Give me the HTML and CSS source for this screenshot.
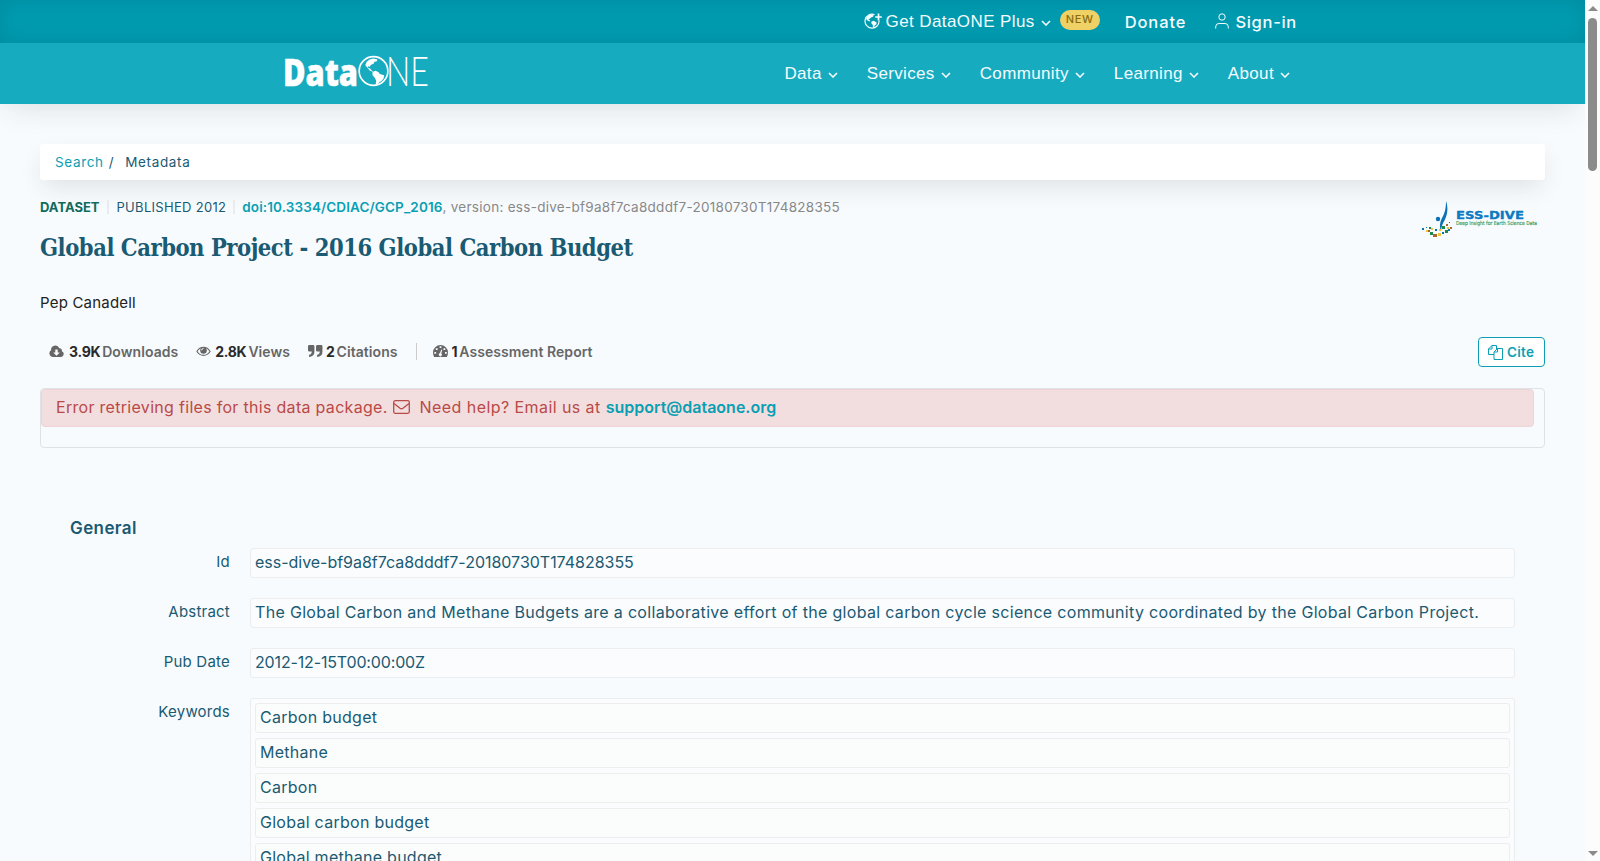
FILE: index.html
```html
<!DOCTYPE html>
<html lang="en">
<head>
    <meta charset="UTF-8">
    <meta name="viewport" content="width=device-width, initial-scale=1.0">
    <title>Global Carbon Project - 2016 Global Carbon Budget</title>
    <link rel="stylesheet" href="styles.css">
</head>
<body>

<!-- Shared icons -->
<svg class="sprite" aria-hidden="true">
    <symbol id="chevron" viewBox="0 0 10 6">
        <path d="M1 1l4 4 4-4" fill="none" stroke="currentColor" stroke-width="1.6"/>
    </symbol>
    <symbol id="globe" viewBox="0 0 32 32">
        <circle cx="16" cy="16" r="14.8" fill="none" stroke="currentColor" stroke-width="1.7"/>
        <path d="M7.500 10l1.500-3.500 3-2.500 4-1 4 1-.5 2-2.500.5-1 2-2.500 1-1.500 2-2-.5.5 2 2 .5 1.500 2 1.500.8-.5.6-3-1.400-2-2.500zM15 17l3-1.200 3 1.200 1.500 2 4.500 1.500-.5 3-2 2.500-2.500 1.500-2 2.800-1.800.2.600-4.500-1.500-3-2.300-2.500z" fill="currentColor"/>
    </symbol>
</svg>

<div class="page">
    <header class="header">
        <div class="top-bar">
            <div class="top-links">
                <a class="plus-link" href="#">
                    <svg class="globe-plus" viewBox="0 0 18 17">
                        <path d="M10.5 1.6A7 7 0 1 0 15 7.5" fill="none" stroke="currentColor" stroke-width="1.2"/>
                        <path d="M2 6c.5-3 3-4.500 5.500-4.600l2 .8-.5 1.500-2 .8-1.200 1.300-1.500.5 2 1.500-.5.8-2.500-1zM7.500 8.500l2.300-.7 2.800 1.700-.2 1.800-1.600 1.200-1 2-.8.2-.2-2.700-1.500-1.700z" fill="currentColor"/>
                        <path d="M14.500.5v7M11.200 4h6.600" stroke="currentColor" stroke-width="1.7"/>
                    </svg>
                    <span>Get DataONE Plus</span>
                    <svg class="chevron"><use href="#chevron"/></svg>
                </a>
                <span class="badge">NEW</span>
                <a class="donate" href="#">Donate</a>
                <a class="sign-in" href="#">
                    <svg class="person" viewBox="0 0 14 16">
                        <circle cx="7" cy="4" r="3.200"/>
                        <path d="M.7 15.500v-1.700a3.300 3.300 0 0 1 3.300-3.300h6a3.300 3.300 0 0 1 3.300 3.300v1.700"/>
                    </svg>
                    <span>Sign-in</span>
                </a>
            </div>
        </div>
        <div class="nav-bar">
            <svg class="logo" viewBox="0 0 144 34">
                <text class="logo-data" x="-2" y="31" textLength="75" lengthAdjust="spacingAndGlyphs">Data</text>
                <use href="#globe" x="73" y="0" width="31" height="32"/>
                <text class="logo-ne" x="101" y="31" textLength="43" lengthAdjust="spacingAndGlyphs">NE</text>
            </svg>
            <nav class="nav">
                <a href="#">Data <svg class="chevron"><use href="#chevron"/></svg></a>
                <a href="#">Services <svg class="chevron"><use href="#chevron"/></svg></a>
                <a href="#">Community <svg class="chevron"><use href="#chevron"/></svg></a>
                <a href="#">Learning <svg class="chevron"><use href="#chevron"/></svg></a>
                <a href="#">About <svg class="chevron"><use href="#chevron"/></svg></a>
            </nav>
        </div>
    </header>

    <main class="content">
        <div class="breadcrumb">
            <a href="#">Search</a><span class="slash">/</span><span>Metadata</span>
        </div>

        <div class="citation-row">
            <div class="citation">
                <div class="meta">
                    <b class="type">DATASET</b>
                    <span class="published">PUBLISHED 2012</span>
                    <span class="ids"><b class="doi">doi:10.3334/CDIAC/GCP_2016</b><span class="version">, version: ess-dive-bf9a8f7ca8dddf7-20180730T174828355</span></span>
                </div>
                <h1>Global Carbon Project - 2016 Global Carbon Budget</h1>
                <p class="author">Pep Canadell</p>
            </div>
            <svg class="ess-logo" viewBox="0 0 117 38">
                <path d="M24 1c2.500 7 1.500 14-1.500 19.500-2 3-3 6-3.500 11-1.500-4-1.500-8 .5-12.500 3.500-6 4.500-11 4.500-18z" fill="#0a72b8"/>
                <circle cx="16" cy="19" r="2.200" fill="#0a72b8"/>
                <g fill="#1d8a4a"><path d="M8 32h3v3H8zM20 26h3v3h-3zM23 30h3v3h-3zM7 27h2v2H7zM27 22h1v1h-1z"/></g>
                <g fill="#f3c431"><path d="M16 33h3v3h-3zM4 30h2v2H4zM9 28h2v2H9zM25 27h2v2h-2zM17 29h2v2h-2z"/></g>
                <g fill="#a8672f"><path d="M11 34h4v3h-4zM6 30h2v2H6zM28 27h2v2h-2zM24 24h2v2h-2z"/></g>
                <g fill="#0a72b8"><path d="M20 32h2v2h-2zM0 28h2v2H0zM13 29h2v2h-2zM26 29h2v2h-2zM4 27h1v1H4z"/></g>
                <text class="ess-name" x="34" y="19" textLength="68" lengthAdjust="spacingAndGlyphs">ESS-DIVE</text>
                <text class="ess-tag" x="34" y="24.500" textLength="81" lengthAdjust="spacingAndGlyphs">Deep Insight for Earth Science Data</text>
            </svg>
        </div>

        <div class="metrics">
            <span class="metric downloads">
                <svg viewBox="0 0 16 14"><path fill-rule="evenodd" d="M4 13.500a4 4 0 0 1-1.800-7.300A4.600 4.600 0 0 1 11 4a2.600 2.600 0 0 1 2.700 3.200A3.300 3.300 0 0 1 12.700 13.500zM6.700 5.500v3H4.500L8 12l3.500-3.500H9.300v-3z"/></svg>
                <b>3.9K</b><span>Downloads</span>
            </span>
            <span class="metric">
                <svg viewBox="0 0 16 14"><path d="M1 7.500C4.500 1.500 11.500 1.500 15 7.500 11.500 13 4.500 13 1 7.500z" fill="none" stroke="currentColor" stroke-width="1.200"/><circle cx="8" cy="6.500" r="3.500"/><path d="M6 6.300a2 2 0 0 1 2-2" fill="none" stroke="#fff"/></svg>
                <b>2.8K</b><span>Views</span>
            </span>
            <span class="metric citations">
                <svg viewBox="0 0 14 13"><path d="M1.200 1h3.600Q6 1 6 2.200V7q0 4.500-4.500 5H1v-2q2.500-.3 2.500-3H1.200Q0 7 0 5.800V2.200Q0 1 1.200 1zM8.700 1h3.600q1.200 0 1.200 1.200V7q0 4.500-4.500 5h-.5v-2Q11 9.700 11 7H8.700q-1.200 0-1.200-1.200V2.200Q7.500 1 8.700 1z"/></svg>
                <b>2</b><span>Citations</span>
            </span>
            <span class="metric report">
                <svg viewBox="0 0 15 13"><path fill-rule="evenodd" d="M0 8a7.500 7.500 0 0 1 15 0q0 2.500-1.200 4.500H1.200Q0 10.500 0 8zM1.300 7.500v1.800h1.800V7.500zM2.800 3.700v1.800h1.800V3.700zM6.600 1.800v1.800h1.800V1.800zM10.500 3.700v1.800h1.800V3.700zM12 7.500v1.800h1.800V7.500zM8.300 5L7 8.600a1.600 1.600 0 1 0 1.300.3L9.300 5.300z"/></svg>
                <b>1</b><span>Assessment Report</span>
            </span>
            <button class="cite">
                <svg viewBox="0 0 15 15"><path d="M6 9.500H.5V4L4 .5h4.500V4M4 .5V4H.5M9.500 3.500h5v11H6V7zM9.500 3.500V7H6"/></svg>
                Cite
            </button>
        </div>

        <div class="files">
            <div class="alert">
                <span class="error">Error retrieving files for this data package.</span>
                <svg viewBox="0 0 17 14"><rect x=".7" y=".7" width="15.600" height="12.600" rx="1.500"/><path d="M1 3.500l6 4.800q1.500 1 3 0l6-4.800"/></svg>
                <span class="help">Need help? Email us at</span>
                <a href="#">support@dataone.org</a>
            </div>
        </div>

        <section class="general">
            <h4>General</h4>
            <div class="row">
                <label>Id</label>
                <div class="value code">ess-dive-bf9a8f7ca8dddf7-20180730T174828355</div>
            </div>
            <div class="row">
                <label>Abstract</label>
                <div class="value">The Global Carbon and Methane Budgets are a collaborative effort of the global carbon cycle science community coordinated by the Global Carbon Project.</div>
            </div>
            <div class="row">
                <label>Pub Date</label>
                <div class="value code date">2012-12-15T00:00:00Z</div>
            </div>
            <div class="row">
                <label>Keywords</label>
                <div class="value keywords">
                    <div class="value">Carbon budget</div>
                    <div class="value">Methane</div>
                    <div class="value">Carbon</div>
                    <div class="value">Global carbon budget</div>
                    <div class="value">Global methane budget</div>
                </div>
            </div>
        </section>
    </main>
</div>

<div class="scrollbar">
    <i class="arrow up"></i>
    <i class="thumb"></i>
    <i class="arrow down"></i>
</div>

</body>
</html>
```
FILE: styles.css
```css
* {
    margin: 0;
    padding: 0;
    box-sizing: border-box;
}

body {
    display: flex;
    height: 100vh;
    overflow: hidden;
    background-color: #f7fbfe;
    font-family: Inter, "Open Sans", sans-serif;
    font-size: 15px;
    color: #1a5a72;
}

a {
    color: #0a9fb3;
    text-decoration: none;
}

.sprite {
    display: none;
}

.page {
    flex: 1;
    height: 100vh;
    overflow: hidden;
}

/* Header */
.header {
    color: #fff;
    box-shadow: 0 10px 30px -8px rgba(50, 50, 50, 0.15);
}

.header a {
    color: #f5fcff;
}

.top-bar {
    height: 43px;
    background-color: #019bb0;
    box-shadow: inset 0 0 20px rgba(0, 80, 100, 0.22);
}

.top-links {
    display: flex;
    align-items: center;
    justify-content: flex-end;
    height: 43px;
    margin-right: 288px;
    font-weight: 500;
}

.plus-link,
.nav a {
    display: flex;
    align-items: center;
    font-family: "Liberation Sans", Arial, sans-serif;
    font-size: 17px;
    font-weight: 400;
    letter-spacing: 0.35px;
}

.plus-link {
    letter-spacing: 0.4px;
}

.globe-plus {
    width: 18px;
    height: 17px;
    margin-right: 4px;
}

.chevron {
    width: 10px;
    height: 6px;
    margin: 3px 0 0 6px;
}

.badge {
    width: 40px;
    height: 20px;
    margin: -3px 25px 0 9px;
    border-radius: 10px;
    background-color: #efd166;
    color: #8a6d10;
    font-size: 11px;
    line-height: 19px;
    letter-spacing: 0.6px;
    text-align: center;
}

.donate,
.sign-in {
    font-size: 16.5px;
    letter-spacing: 0.9px;
}

.sign-in {
    display: flex;
    align-items: center;
    margin-left: 29px;
    letter-spacing: 0.7px;
}

.person {
    width: 14px;
    height: 16px;
    margin: -2px 6px 0 0;
    fill: none;
    stroke: #f5fcff;
}

.nav-bar {
    display: flex;
    justify-content: space-between;
    height: 61px;
    padding: 0 295px 0 285px;
    background-color: #17abc0;
}

.logo {
    width: 144px;
    height: 34px;
    margin-top: 12px;
    overflow: visible;
    color: #fff;
    fill: #fff;
}

.logo-data {
    font: 800 37px "Open Sans", sans-serif;
    stroke: #fff;
    stroke-width: 0.5px;
}

.logo-ne {
    font: 300 42px Lato, sans-serif;
}

.nav {
    display: flex;
    gap: 29px;
}

/* Breadcrumb */
.content {
    padding: 40px 40px 0;
}

.breadcrumb {
    height: 36px;
    padding-left: 15px;
    border-radius: 3px;
    background-color: #fff;
    box-shadow: 0 10px 24px -4px rgba(50, 50, 50, 0.13);
    font-size: 13.5px;
    line-height: 36px;
    letter-spacing: 0.65px;
}

.slash {
    margin: 0 11px 0 5px;
}

/* Title block */
.citation-row {
    display: flex;
    justify-content: space-between;
}

.meta {
    display: flex;
    margin-top: 18px;
    font-size: 13px;
    line-height: 18px;
}

.type {
    color: #106b5d;
}

.published,
.ids {
    height: 14px;
    margin: 2px 0 0 7px;
    padding-left: 8px;
    border-left: 2px solid #e8ecef;
    line-height: 14px;
    letter-spacing: 0.3px;
}

.ids {
    padding-left: 7px;
    font-size: 13.5px;
}

.doi {
    color: #0a9fb3;
    font-weight: 600;
    letter-spacing: 0.12px;
}

.version {
    color: #888;
    letter-spacing: 0.28px;
}

h1 {
    margin-top: 15px;
    font: 700 23.5px/34px "DejaVu Serif Condensed", "DejaVu Serif", serif;
    letter-spacing: -0.46px;
}

.author {
    margin-top: 28px;
    color: #222;
    font-size: 15px;
    line-height: 20px;
    letter-spacing: 0.2px;
}

.ess-logo {
    width: 117px;
    height: 38px;
    margin: 20px 6px 0 0;
    overflow: visible;
}

.ess-name {
    font: 700 10px "DejaVu Sans", sans-serif;
    fill: #0b7ac0;
    stroke: #0b7ac0;
    stroke-width: 0.3px;
}

.ess-tag {
    font: 400 5.5px "DejaVu Sans", sans-serif;
    fill: #2e9a5c;
    stroke: #2e9a5c;
    stroke-width: 0.15px;
}

/* Metrics */
.metrics {
    display: flex;
    align-items: center;
    height: 30px;
    margin-top: 24px;
    padding-left: 9px;
    color: #666;
    font-size: 14px;
    font-weight: 600;
    letter-spacing: 0.06px;
}

.metric {
    display: flex;
    align-items: center;
    margin: -2px 18px 0 0;
}

.metric svg {
    width: 15px;
    height: 14px;
    margin-right: 4px;
    fill: #666;
}

.downloads svg {
    margin-right: 5px;
}

.metric b {
    margin-right: 2px;
    color: #2a2a2a;
    font-weight: 700;
    letter-spacing: -0.3px;
}

.citations svg {
    margin-right: 3px;
}

.report {
    padding-left: 16px;
    border-left: 1px solid #ccc;
}

.cite {
    display: flex;
    align-items: center;
    width: 67px;
    height: 30px;
    margin-left: auto;
    padding-left: 9px;
    border: 1px solid #0a9fb3;
    border-radius: 4px;
    background-color: #fff;
    color: #0a9fb3;
    font: 600 13.5px Inter, sans-serif;
    letter-spacing: 0.3px;
}

.cite svg {
    width: 15px;
    height: 15px;
    margin-right: 4px;
    fill: none;
    stroke: #0a9fb3;
}

/* Package files */
.files {
    height: 60px;
    margin-top: 21px;
    border: 1px solid #dfe2e4;
    border-radius: 4px;
}

.alert {
    display: flex;
    align-items: center;
    height: 38px;
    margin-right: 10px;
    padding: 0 0 2px 14px;
    border: 1px solid #eed3d7;
    border-radius: 4px;
    background-color: #f2dede;
    color: #b94a48;
    font-size: 16px;
}

.error {
    letter-spacing: 0.3px;
}

.help {
    letter-spacing: 0.43px;
}

.alert svg {
    width: 17px;
    height: 14px;
    margin: 0 10px 0 5px;
    fill: none;
    stroke: #b94a48;
    stroke-width: 1.3;
}

.alert a {
    margin-left: 5px;
    font-weight: 600;
}

/* Metadata */
.general {
    margin: 69px 30px 0;
}

h4 {
    height: 31px;
    font-size: 17px;
    font-weight: 600;
    line-height: 22px;
    letter-spacing: 0.4px;
}

.row {
    display: grid;
    grid-template-columns: 160px 1fr;
    gap: 20px;
    margin-bottom: 20px;
}

label {
    padding-top: 4px;
    font-size: 15px;
    line-height: 20px;
    letter-spacing: 0.22px;
    text-align: right;
}

.value {
    min-height: 30px;
    padding-left: 4px;
    border: 1px solid #ebedee;
    border-radius: 3px;
    background-color: #fbfcfe;
    font-size: 16px;
    line-height: 27px;
    letter-spacing: 0.315px;
    white-space: nowrap;
}

.code {
    letter-spacing: -0.02px;
}

.date {
    letter-spacing: -0.15px;
}

.keywords {
    padding: 4px;
}

.keywords .value {
    margin-bottom: 5px;
    background-color: #fbfdfc;
    letter-spacing: 0.27px;
}

/* Scrollbar */
.scrollbar {
    display: flex;
    flex-direction: column;
    align-items: center;
    width: 15px;
    background-color: #fcfcfc;
}

.arrow {
    border: 5px solid transparent;
}

.up {
    margin-top: 1px;
    border-bottom-color: #8b8b8b;
}

.down {
    margin: auto 0 0;
    border-top-color: #8b8b8b;
}

.thumb {
    width: 9px;
    height: 153px;
    margin-top: 7px;
    border-radius: 5px;
    background-color: #8b8b8b;
}
```
